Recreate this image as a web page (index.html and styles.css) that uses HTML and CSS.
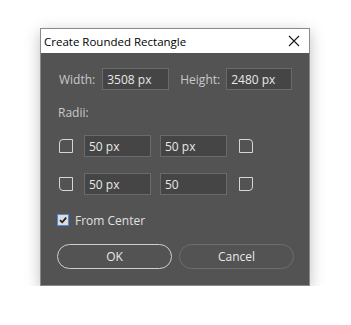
FILE: index.html
```html
<!DOCTYPE html>
<html lang="en">
<head>
    <meta charset="UTF-8">
    <meta name="viewport" content="width=device-width, initial-scale=1.0">
    <title>Create Rounded Rectangle</title>
    <link rel="stylesheet" href="styles.css">
</head>
<body>
    <div class="dialog">
        <div class="titlebar">
            <span class="title">Create Rounded Rectangle</span>
            <svg class="close" width="12" height="12" viewBox="0 0 12 12">
                <path d="M1 1 L11 11 M11 1 L1 11" stroke="#1a1a1a" stroke-width="1.1" fill="none"/>
            </svg>
        </div>
        <div class="content">
            <div class="size-row">
                <label class="lbl" for="width">Width:</label>
                <input class="field w-field" id="width" type="text" value="3508 px">
                <label class="lbl lbl-h" for="height">Height:</label>
                <input class="field h-field" id="height" type="text" value="2480 px">
            </div>

            <div class="radii-label">Radii:</div>

            <div class="radii-row">
                <span class="corner tl"></span>
                <input class="field r-field" type="text" value="50 px">
                <input class="field r-field" type="text" value="50 px">
                <span class="corner tr"></span>
            </div>
            <div class="radii-row second">
                <span class="corner bl"></span>
                <input class="field r-field" type="text" value="50 px">
                <input class="field r-field" type="text" value="50">
                <span class="corner br"></span>
            </div>

            <div class="check-row">
                <span class="check">
                    <svg width="10" height="10" viewBox="0 0 10 10">
                        <path d="M2 5.2 L4.2 7.3 L8.2 2.6" stroke="#222" stroke-width="1.8" fill="none"/>
                    </svg>
                </span>
                <span class="check-text">From Center</span>
            </div>

            <div class="buttons">
                <button class="btn ok">OK</button>
                <button class="btn cancel">Cancel</button>
            </div>
        </div>
    </div>
</body>
</html>
```

FILE: styles.css
```css
body {
    margin: 0;
    padding: 28px 0 0 40px;
    background: #ffffff;
    font-family: 'Open Sans', 'Liberation Sans', sans-serif;
    font-size: 12px;
}
.dialog {
    width: 268px;
    height: 256px;
    border: 1px solid #8a8a8a;
    background: #535353;
    box-shadow: 0 4px 14px rgba(0, 0, 0, 0.25);
    display: flex;
    flex-direction: column;
}
.titlebar {
    height: 24px;
    background: #ffffff;
    display: flex;
    align-items: center;
    justify-content: space-between;
    padding: 0 9px 0 3px;
}
.title {
    color: #000000;
    font-size: 11.5px;
}
.content {
    padding: 15px 0 0 16px;
    color: #c9c9c9;
}
.size-row {
    display: flex;
    align-items: center;
    height: 22px;
    padding-left: 2px;
}
.lbl {
    color: #c9c9c9;
}
.field {
    box-sizing: border-box;
    height: 22px;
    border: 1px solid #6a6a6a;
    background: #454545;
    color: #e8e8e8;
    font-family: inherit;
    font-size: 12px;
    padding: 0 4px;
    outline: none;
}
.w-field {
    width: 67px;
    margin-left: 7px;
}
.lbl-h {
    margin-left: 11px;
}
.h-field {
    width: 66px;
    margin-left: 6px;
}
.radii-label {
    margin-top: 15px;
    height: 16px;
    line-height: 16px;
    padding-left: 1px;
}
.radii-row {
    display: flex;
    align-items: center;
    height: 22px;
    margin-top: 14px;
    padding-left: 2px;
}
.radii-row.second {
    margin-top: 16px;
}
.corner {
    box-sizing: border-box;
    width: 14px;
    height: 14px;
    border: 1.5px solid #d6d6d6;
}
.corner.tl { border-top-left-radius: 4px; }
.corner.tr { border-top-right-radius: 4px; }
.corner.bl { border-bottom-left-radius: 4px; }
.corner.br { border-bottom-right-radius: 4px; }
.r-field {
    width: 67px;
    margin-left: 11px;
}
.r-field + .r-field {
    margin-left: 9px;
}
.r-field + .corner {
    margin-left: 12px;
}
.check-row {
    display: flex;
    align-items: center;
    height: 16px;
    margin-top: 17px;
}
.check {
    box-sizing: border-box;
    width: 12px;
    height: 12px;
    border: 1px solid #4a8be0;
    background: #dcdcdc;
    display: flex;
    align-items: center;
    justify-content: center;
}
.check-text {
    margin-left: 6px;
    color: #e0e0e0;
}
.buttons {
    display: flex;
    margin-top: 16px;
}
.btn {
    box-sizing: border-box;
    width: 115px;
    height: 25px;
    border-radius: 13px;
    background: transparent;
    color: #e8e8e8;
    font-family: inherit;
    font-size: 12px;
}
.ok {
    border: 1.5px solid #cfcfcf;
}
.cancel {
    margin-left: 7px;
    border: 1px solid #6e6e6e;
}
```
